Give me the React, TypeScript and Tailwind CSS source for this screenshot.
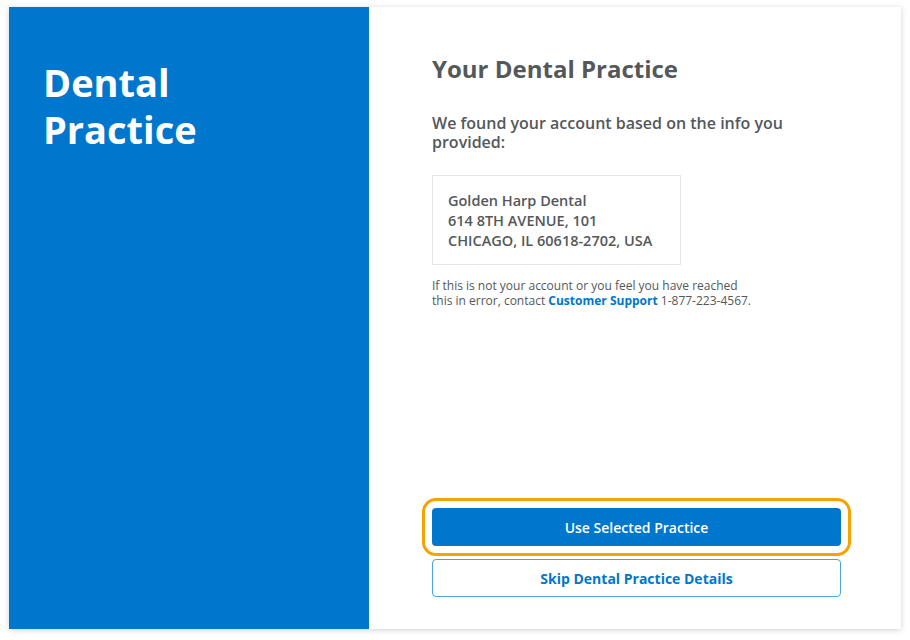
export default function App() {
    return (
        <div className="w-[910px] h-[640px] bg-white pt-[7px] pl-[9px] font-['Open_Sans',sans-serif]">
            <div className="w-[892px] h-[622px] flex bg-white shadow-[0_1px_6px_rgba(0,0,0,0.18)]">
                {/* left blue panel */}
                <div className="w-[360px] bg-[#0077cc] pl-[34px] pt-[52px]">
                    <h1 className="text-white font-bold text-[38px] leading-[47px]">
                        Dental
                        <br />
                        Practice
                    </h1>
                </div>

                <div className="flex-1 flex flex-col pl-[63px] pr-[60px] pt-[46px] pb-[32px] text-[#54585a]">
                    <h2 className="text-[24px] font-bold leading-[32px]">Your Dental Practice</h2>

                    <p className="mt-[29px] text-[16px] font-semibold leading-[19px] w-[380px]">
                        We found your account based on the info you provided:
                    </p>

                    <div className="mt-[23px] w-[249px] border border-[#e6e6e6] px-[15px] pt-[15px] pb-[13px] text-[14.5px] font-semibold leading-[20px]">
                        <div>Golden Harp Dental</div>
                        <div>614 8TH AVENUE, 101</div>
                        <div>CHICAGO, IL 60618-2702, USA</div>
                    </div>

                    <p className="mt-[13px] text-[12px] leading-[15px] w-[325px]">
                        If this is not your account or you feel you have reached this in error, contact{" "}
                        <a className="text-[#0077cc] font-bold">Customer Support</a> 1-877-223-4567.
                    </p>

                    <div className="mt-auto flex flex-col gap-[13px]">
                        <button className="h-[38px] w-full rounded-[4px] bg-[#0077cc] text-white text-[14px] font-semibold outline-[3px] outline-solid outline-[#f5a300] outline-offset-[7px]">
                            Use Selected Practice
                        </button>
                        <button className="h-[38px] w-full rounded-[4px] border border-[#4aa3e0] bg-white text-[#0077cc] text-[14px] font-bold">
                            Skip Dental Practice Details
                        </button>
                    </div>
                </div>
            </div>
        </div>
    );
}
